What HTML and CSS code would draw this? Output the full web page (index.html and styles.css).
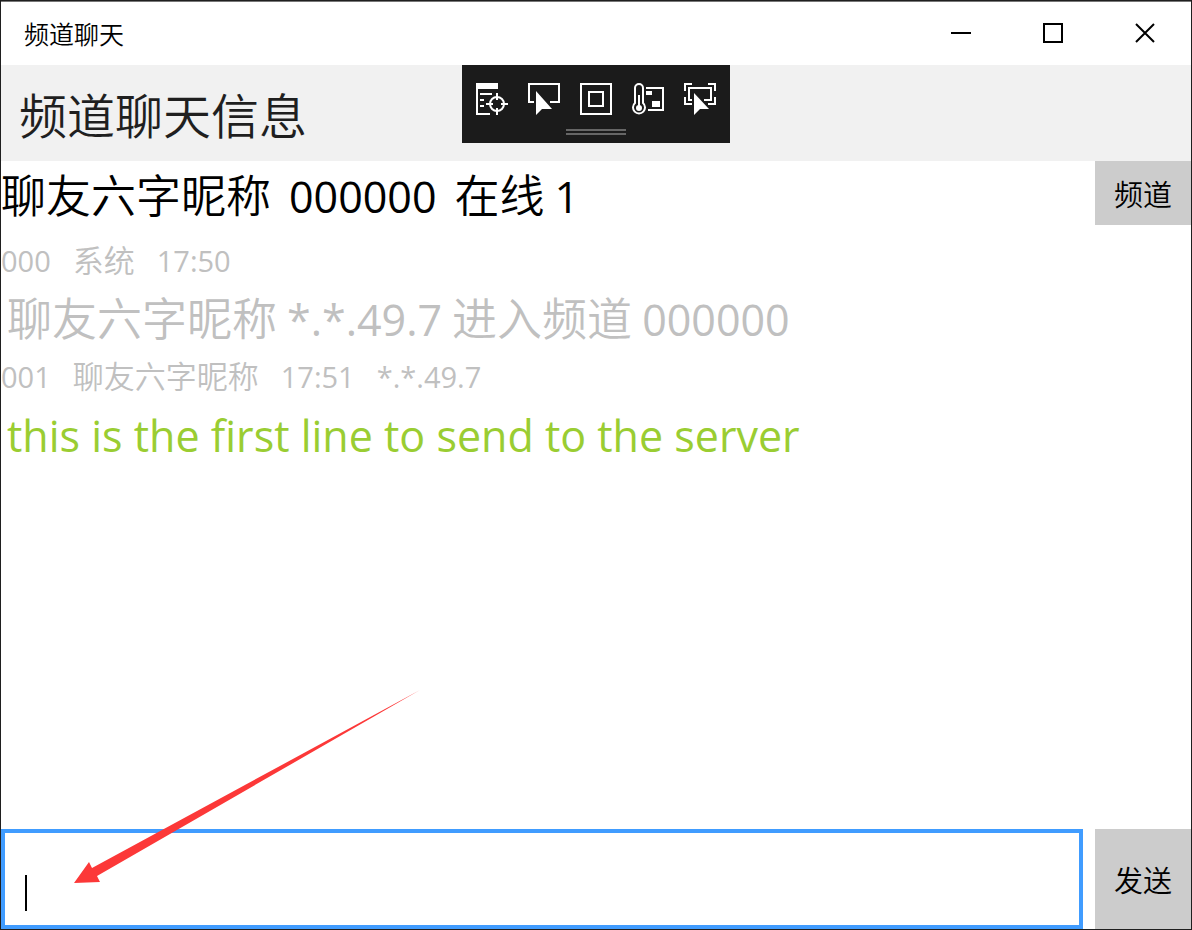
FILE: index.html
```html
<!DOCTYPE html>
<html lang="zh-CN">
<head>
    <meta charset="UTF-8">
    <title>频道聊天</title>
    <link rel="stylesheet" href="styles.css">
</head>
<body>
    <div class="window">
        <div class="title-bar">
            <span class="title">频道聊天</span>
            <div class="window-buttons">
                <button type="button" aria-label="最小化">
                    <svg width="20" height="20"><path d="M0 10H20"/></svg>
                </button>
                <button type="button" aria-label="最大化">
                    <svg width="20" height="20"><path d="M1 1H19V19H1Z"/></svg>
                </button>
                <button type="button" aria-label="关闭">
                    <svg width="20" height="20"><path d="M1 1L19 19M19 1L1 19"/></svg>
                </button>
            </div>
        </div>

        <header class="page-header">
            <h1>频道聊天信息</h1>
            <!-- 调试工具栏 -->
            <div class="debug-bar">
                <div class="debug-tools">
                    <button type="button" aria-label="转到实时可视化树">
                        <svg width="32" height="32">
                            <path class="solid" d="M0 0H22V6H2V30H14V32H0ZM4 10H16V12H4ZM4 16H8V18H4ZM4 22H8V24H4Z"/>
                            <circle cx="21" cy="21" r="7"/>
                            <path d="M21 10V17M21 25V32M10 21H17M25 21H32"/>
                        </svg>
                    </button>
                    <button type="button" aria-label="选择元素">
                        <svg width="32" height="32">
                            <path d="M6 19H1V1H31V19H22"/>
                            <path class="solid" d="M8 8L24 26L14 26L8 32Z"/>
                        </svg>
                    </button>
                    <button type="button" aria-label="显示布局装饰">
                        <svg width="32" height="32"><path d="M1 1H31V31H1ZM9 9H23V23H9Z"/></svg>
                    </button>
                    <button type="button" aria-label="热重载">
                        <svg width="32" height="32">
                            <path d="M3 20V5A4 4 0 0 1 11 5V20A6 6 0 1 1 3 20Z"/>
                            <path d="M7 12V24M14 5H31V27H16"/>
                            <circle class="solid" cx="7" cy="25" r="3"/>
                            <path class="solid" d="M14 8H20V12H14ZM20 18H28V24H20Z"/>
                        </svg>
                    </button>
                    <button type="button" aria-label="跟踪焦点元素">
                        <svg width="32" height="32">
                            <path d="M1 8V1H8M24 1H31V8M1 14V21H8M31 14V21H24"/>
                            <path d="M8 17H5V5H27V17H20"/>
                            <path class="solid" d="M10 10L25 26L16 26L10 32Z"/>
                        </svg>
                    </button>
                </div>
                <div class="debug-grip"></div>
            </div>
        </header>

        <main class="chat">
            <div class="status-row">
                <p class="status">
                    <span>聊友六字昵称</span>
                    <span><span class="latin">000000</span></span>
                    <span>在线 <span class="latin">1</span></span>
                </p>
                <button type="button" class="action">频道</button>
            </div>
            <div class="messages">
                <p class="meta"><span class="latin">000</span><span>系统</span><span class="latin">17:50</span></p>
                <p class="message">聊友六字昵称 <span class="latin">*.*.49.7</span> 进入频道 <span class="latin">000000</span></p>
                <p class="meta"><span class="latin">001</span><span>聊友六字昵称</span><span class="latin">17:51</span><span class="latin">*.*.49.7</span></p>
                <p class="message mine"><span class="latin">this is the first line to send to the server</span></p>
            </div>
        </main>

        <form class="compose">
            <div class="input-box">
                <input type="text" class="compose-input" aria-label="消息">
                <span class="caret"></span>
            </div>
            <button type="button" class="action">发送</button>
            <svg class="arrow" width="346" height="193" viewBox="0 0 346 193">
                <path d="M0 193L15 172L18 178L346 0L23 186L26 192Z"/>
            </svg>
        </form>
    </div>
</body>
</html>
```
FILE: styles.css
```css
* {
    box-sizing: border-box;
}

body {
    margin: 0;
    font-family: "Noto Sans CJK SC", sans-serif;
    font-weight: 350;
    color: #000;
}

p, h1 {
    margin: 0;
    font-weight: inherit;
}

button {
    padding: 0;
    border: none;
    background: none;
    font: inherit;
    color: inherit;
}

svg {
    display: block;
    fill: none;
    stroke: #000;
    stroke-width: 2;
}

/* 窗口 */
.window {
    display: flex;
    flex-direction: column;
    height: 100vh;
    border: 1px solid #1f1f1f;
    background: #fff;
}

/* 标题栏 */
.title-bar {
    display: flex;
    justify-content: space-between;
    height: 64px;
    border-top: 1px solid #777;
}
.title {
    padding-left: 23px;
    font-size: 25px;
    line-height: 62px;
}
.window-buttons {
    display: flex;
    height: 62px;
}
.window-buttons button {
    display: flex;
    align-items: center;
    justify-content: center;
    width: 92px;
}

/* 页头 */
.page-header {
    position: relative;
    height: 96px;
    padding-left: 18px;
    background: #f1f1f1;
}
.page-header h1 {
    font-size: 48px;
    line-height: 96px;
    color: #1f1f1f;
}

/* 调试工具栏，浮在页头上方 */
.debug-bar {
    position: absolute;
    top: 0;
    left: 0;
    right: 0;
    width: fit-content;
    height: 78px;
    margin: 0 auto;
    padding: 18px 14px 0;
    background: #1b1b1b;
}
.debug-tools {
    display: flex;
    gap: 20px;
}
.debug-tools svg {
    stroke: #fff;
}
.debug-tools .solid {
    fill: #fff;
    stroke: none;
}
.debug-grip {
    width: 60px;
    height: 6px;
    margin: 14px auto 0;
    border: solid #666;
    border-width: 2px 0;
}

/* 聊天内容 */
.chat {
    flex: 1;
    min-height: 0;
}
.status-row {
    display: flex;
    justify-content: space-between;
    align-items: flex-start;
    height: 72px;
}
.status {
    display: flex;
    gap: 18px;
    font-size: 45px;
    line-height: 66px;
}
.latin {
    font-family: "Open Sans", "Noto Sans", sans-serif;
    font-weight: 400;
    line-height: 1;
}
.status .latin,
.message .latin {
    font-size: 43px;
}
.action {
    width: 96px;
    height: 64px;
    background: #ccc;
    font-size: 29px;
}
.messages {
    color: #c0c0c0;
}
.meta {
    display: flex;
    align-items: baseline;
    gap: 22px;
    font-size: 31px;
    line-height: 52px;
}
.meta .latin {
    font-size: 29px;
}
.message {
    padding-left: 6px;
    font-size: 45px;
    line-height: 64px;
}
.mine {
    color: #9acd32;
}

/* 输入区 */
.compose {
    position: relative;
    display: flex;
    gap: 12px;
    height: 100px;
}
.input-box {
    position: relative;
    flex: 1;
}
.compose-input {
    width: 100%;
    height: 100%;
    padding: 28px 20px 0;
    border: 4px solid #409cff;
    outline: none;
    font: inherit;
    font-size: 29px;
}
.caret {
    position: absolute;
    left: 24px;
    bottom: 18px;
    width: 2px;
    height: 36px;
    background: #000;
}
.compose .action {
    height: 100%;
}

/* 指向输入框的箭头 */
.arrow {
    position: absolute;
    left: 73px;
    bottom: 46px;
    pointer-events: none;
}
.arrow path {
    fill: #fc3838;
    stroke: none;
}
```
